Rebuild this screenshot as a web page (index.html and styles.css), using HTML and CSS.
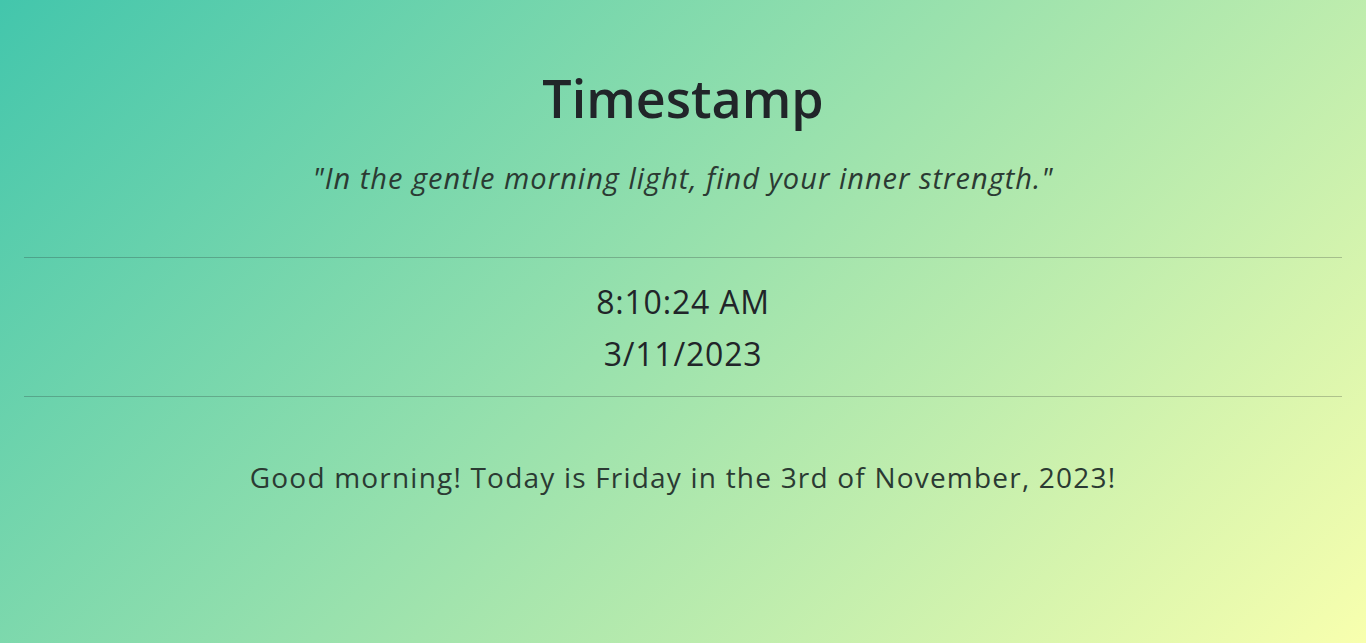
FILE: index.html
```html
<!DOCTYPE html>
<html lang="en">
<head>
<meta charset="utf-8">
<title>Timestamp</title>
<link rel="stylesheet" href="styles.css">
</head>
<body>
<main class="page">
  <header class="intro">
    <h1 class="title">Timestamp</h1>
    <p class="quote">"In the gentle morning light, find your inner strength."</p>
  </header>
  <hr class="rule rule-top">
  <section class="clock">
    <div class="time">8:10:24 AM</div>
    <div class="date">3/11/2023</div>
  </section>
  <hr class="rule">
  <p class="greeting">Good morning! Today is Friday in the 3rd of November, 2023!</p>
</main>
</body>
</html>
```
FILE: styles.css
```css
html, body {
  margin: 0;
  padding: 0;
}
body {
  min-height: 100vh;
  background: linear-gradient(135deg, #43c6ac, #f8ffae);
  font-family: "Open Sans", "Noto Sans", sans-serif;
  color: #212529;
}
.page {
  padding: 0 24px;
  text-align: center;
}
.intro {
  padding-top: 62px;
}
.title {
  margin: 0;
  font-size: 52px;
  font-weight: 600;
  line-height: 72px;
}
.quote {
  margin: 24px 0 0;
  font-size: 29px;
  font-style: italic;
  line-height: 40px;
  letter-spacing: 1px;
  color: #2b3a33;
}
.rule {
  margin: 0;
  border: 0;
  border-top: 1px solid rgba(33, 37, 41, 0.25);
}
.rule-top {
  margin-top: 59px;
}
.clock {
  padding: 18px 0 16px;
  font-size: 32px;
  line-height: 52px;
  letter-spacing: 0.8px;
}
.greeting {
  margin: 60px 0 0;
  font-size: 28px;
  line-height: 40px;
  letter-spacing: 1.2px;
  color: #2b3a33;
}
```
